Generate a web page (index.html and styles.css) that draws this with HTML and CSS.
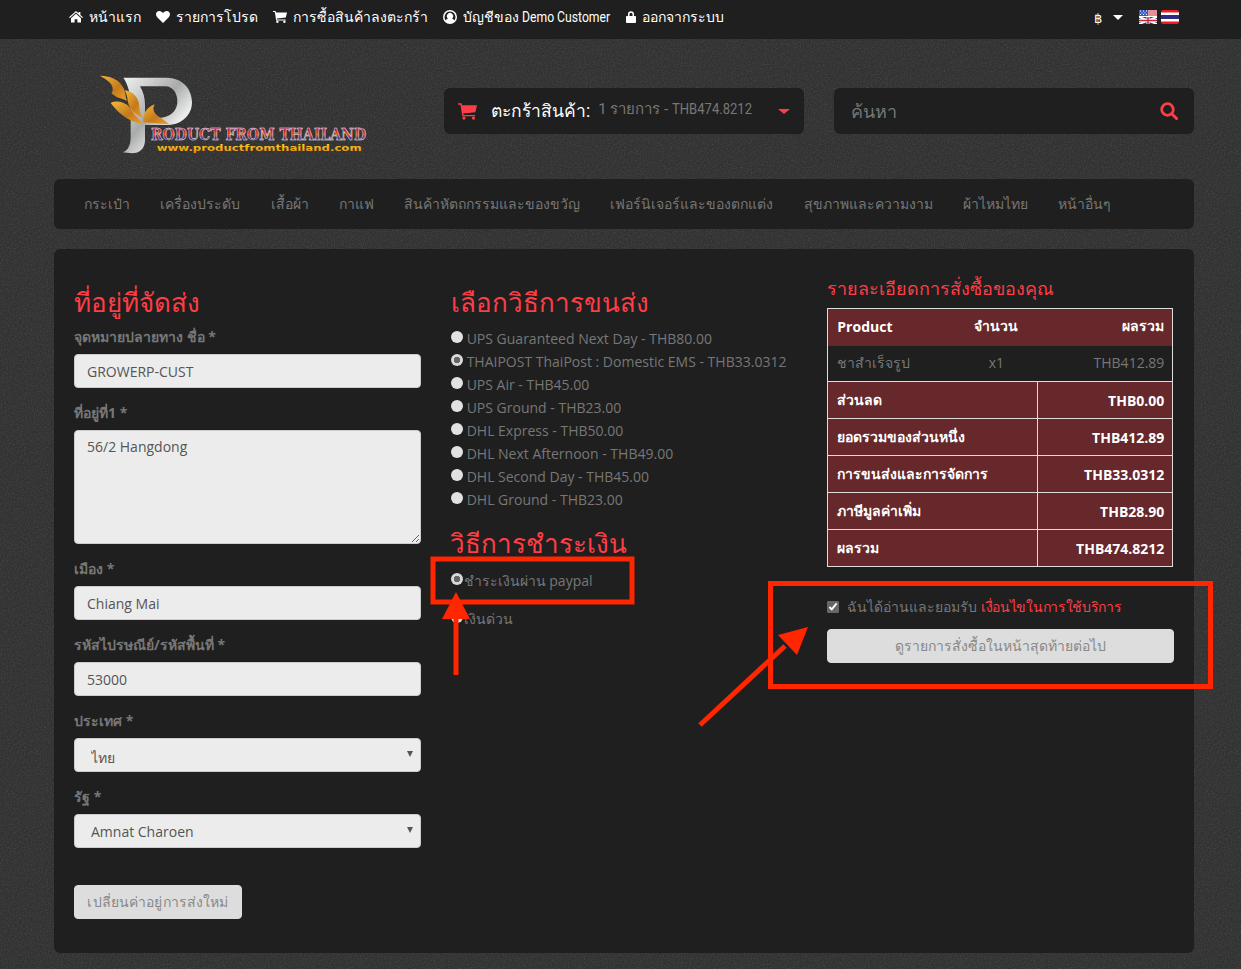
FILE: index.html
```html
<!DOCTYPE html>
<html lang="th">
<head>
  <meta charset="UTF-8" />
  <title>ที่อยู่ที่จัดส่ง - Product From Thailand</title>
  <link rel="stylesheet" href="styles.css">
</head>
<body>
  <div class="topbar">
    <nav class="toplinks">
      <a href="#"><svg class="ico" viewBox="0 0 14 12"><path d="M7 0 L9.6 2.3 V1 H11.4 V3.9 L14 6.3 L13.2 7.1 L7 1.6 L.8 7.1 L0 6.3Z M7 2.8 L12 7.2 V11.6 H8.4 V8.2 H5.6 V11.6 H2 V7.2Z"/></svg>หน้าแรก</a>
      <a href="#"><svg class="ico ico-heart" viewBox="0 0 14 12"><path d="M7 12 L1 6 C-1 3.5 .2 0 3.4 0 C5 0 6.3 1 7 2.2 C7.7 1 9 0 10.6 0 C13.8 0 15 3.5 13 6Z"/></svg>รายการโปรด</a>
      <a href="#"><svg class="ico" viewBox="0 0 14 12"><path d="M0 0 H2.6 L3 1.4 H14 L12.8 6.6 L3.9 7.5 L4.1 8.5 H12.6 V9.5 H3.2 L1.8 1 H0Z"/><circle cx="4.4" cy="10.8" r="1.2"/><circle cx="11.4" cy="10.8" r="1.2"/></svg>การซื้อสินค้าลงตะกร้า</a>
      <a href="#"><svg class="ico" viewBox="0 0 14 14"><path fill-rule="evenodd" d="M7 0 A7 7 0 1 0 7 14 A7 7 0 1 0 7 0Z M7 1.6 A5.4 5.4 0 0 1 11.2 10.4 C10.4 9.2 9.6 8.6 9 8.5 A3.1 3.1 0 1 0 5 8.5 C4.4 8.6 3.6 9.2 2.8 10.4 A5.4 5.4 0 0 1 7 1.6Z"/></svg>บัญชีของ&nbsp;<span class="narrow">Demo Customer</span></a>
      <a href="#"><svg class="ico ico-lock" viewBox="0 0 10 12"><path fill-rule="evenodd" d="M2 5 V3.2 A3 3 0 0 1 8 3.2 V5 H9.2 A.8 .8 0 0 1 10 5.8 V11.2 A.8 .8 0 0 1 9.2 12 H.8 A.8 .8 0 0 1 0 11.2 V5.8 A.8 .8 0 0 1 .8 5Z M3.5 5 H6.5 V3.2 A1.5 1.5 0 0 0 3.5 3.2Z"/></svg>ออกจากระบบ</a>
    </nav>
    <div class="topright">
      <span class="currency">฿</span>
      <span class="caret caret-white"></span>
      <svg class="flag flag-en" viewBox="0 0 18 14">
        <rect width="18" height="14" fill="#fff"/>
        <path d="M0 1H18M0 3H18M0 5H18" stroke="#c8242f" stroke-width="1"/>
        <rect width="9" height="6" fill="#2f5fc8"/>
        <path d="M1 1h1M4 1h1M7 1h1M2.5 3h1M5.5 3h1M1 4.500h1M4 4.500h1M7 4.500h1" stroke="#fff" stroke-width="1"/>
        <rect y="7" width="18" height="7" fill="#2b3f8c"/>
        <path d="M0 7L18 14M18 7L0 14" stroke="#fff" stroke-width="2"/>
        <path d="M9 7V14M0 10.500H18" stroke="#fff" stroke-width="3"/>
        <path d="M9 7V14M0 10.500H18" stroke="#c8242f" stroke-width="1.500"/>
      </svg>
      <svg class="flag flag-th" viewBox="0 0 18 14">
        <rect width="18" height="14" rx="2" fill="#ed1c24"/>
        <rect y="2.500" width="18" height="9" fill="#fff"/>
        <rect y="5" width="18" height="4" fill="#2d2a7f"/>
      </svg>
    </div>
  </div>

  <div class="page">
    <header class="header">
      <a class="logo" href="#">
        <svg class="logo-art" viewBox="0 0 870 300" width="290" height="100">
          <defs>
            <linearGradient id="silver" x1="0" y1="0" x2="1" y2="1">
              <stop offset="0" stop-color="#f2f2f2"/>
              <stop offset=".45" stop-color="#a9abab"/>
              <stop offset=".7" stop-color="#eeeeee"/>
              <stop offset="1" stop-color="#b5b6b6"/>
            </linearGradient>
            <linearGradient id="gold" x1="0" y1="0" x2="1" y2="1">
              <stop offset="0" stop-color="#f4b93c"/>
              <stop offset=".55" stop-color="#c47a1c"/>
              <stop offset="1" stop-color="#ee9f2c"/>
            </linearGradient>
            <linearGradient id="stripes" x1="0" y1="0" x2="0" y2="1">
              <stop offset="0" stop-color="#5c1e8c"/>
              <stop offset=".3" stop-color="#b01c3c"/>
              <stop offset=".55" stop-color="#e0502a"/>
              <stop offset=".75" stop-color="#3b2a9a"/>
              <stop offset="1" stop-color="#c01c3c"/>
            </linearGradient>
            <linearGradient id="amber" x1="0" y1="0" x2="0" y2="1">
              <stop offset="0" stop-color="#ffd21f"/>
              <stop offset="1" stop-color="#e88a0c"/>
            </linearGradient>
          </defs>
          <path fill="url(#silver)" fill-rule="evenodd" d="M100 38 H228 C282 38 306 76 306 112 C306 150 276 178 236 180 H165 V225 C165 250 150 265 125 265 L98 262 C115 255 122 240 122 215 V120 C122 90 115 60 100 38Z M150 64 H226 C250 64 264 88 262 114 C259 140 240 156 212 158 H165 V120 C165 100 160 80 150 64Z"/>
          <path fill="url(#gold)" d="M30 32 C58 32 90 42 102 72 C108 88 106 98 112 108 C96 100 76 98 64 84 C72 78 68 60 58 52 C50 44 40 38 30 32Z"/>
          <path fill="url(#gold)" d="M104 76 C126 78 146 96 148 122 C148 136 152 148 160 160 C138 150 118 134 114 112 C112 98 110 86 104 76Z"/>
          <path fill="url(#gold)" d="M62 114 C82 104 106 112 120 128 C130 142 140 160 162 176 C126 176 88 150 62 114Z"/>
          <path fill="url(#gold)" d="M160 172 C156 150 170 126 194 118 C184 136 196 150 214 160 L238 178Z"/>
          <text class="logo-name" x="183" y="224" textLength="645" lengthAdjust="spacingAndGlyphs">RODUCT FROM THAILAND</text>
          <text class="logo-url" x="200" y="259" textLength="615" lengthAdjust="spacingAndGlyphs">www.productfromthailand.com</text>
        </svg>
      </a>
      <div class="cartbox">
        <svg class="cart-ico" viewBox="0 0 14 12"><path d="M0 0 H2.6 L3 1.4 H14 L12.8 6.600 L3.900 7.500 L4.100 8.500 H12.600 V9.500 H3.200 L1.800 1 H0Z"/><circle cx="4.400" cy="10.800" r="1.200"/><circle cx="11.400" cy="10.800" r="1.200"/></svg>
        <span class="cart-title">ตะกร้าสินค้า:</span>
        <span class="cart-info">1 รายการ - <span class="narrow">THB474.8212</span></span>
        <span class="caret caret-red"></span>
      </div>
      <div class="searchbox">
        <input class="search-input" type="text" placeholder="ค้นหา">
        <svg class="search-ico" viewBox="0 0 18 18"><circle cx="7.500" cy="7.500" r="5.800" fill="none" stroke="#ff3d46" stroke-width="2.800"/><path d="M11.800 11.800 L16.500 16.500" stroke="#ff3d46" stroke-width="3" stroke-linecap="round"/></svg>
      </div>
    </header>

    <nav class="mainnav">
      <a href="#">กระเป๋า</a>
      <a href="#">เครื่องประดับ</a>
      <a href="#">เสื้อผ้า</a>
      <a href="#">กาแฟ</a>
      <a href="#">สินค้าหัตถกรรมและของขวัญ</a>
      <a href="#">เฟอร์นิเจอร์และของตกแต่ง</a>
      <a href="#">สุขภาพและความงาม</a>
      <a href="#">ผ้าไหมไทย</a>
      <a href="#">หน้าอื่นๆ</a>
    </nav>

    <main class="panel">
      <section class="col">
        <h2 class="title">ที่อยู่ที่จัดส่ง</h2>
        <div class="group">
          <label>จุดหมายปลายทาง ชื่อ *</label>
          <input class="field" type="text" value="GROWERP-CUST">
        </div>
        <div class="group">
          <label>ที่อยู่ที่1 *</label>
          <textarea class="field area">56/2 Hangdong</textarea>
        </div>
        <div class="group">
          <label>เมือง *</label>
          <input class="field" type="text" value="Chiang Mai">
        </div>
        <div class="group">
          <label>รหัสไปรษณีย์/รหัสพื้นที่ *</label>
          <input class="field" type="text" value="53000">
        </div>
        <div class="group">
          <label>ประเทศ *</label>
          <select class="field pick pick-th"><option>ไทย</option></select>
        </div>
        <div class="group">
          <label>รัฐ *</label>
          <select class="field pick"><option>Amnat Charoen</option></select>
        </div>
        <button class="btn btn-reset">เปลี่ยนค่าอยู่การส่งใหม่</button>
      </section>

      <section class="col">
        <h2 class="title">เลือกวิธีการขนส่ง</h2>
        <div class="radios">
          <label class="radio"><input type="radio" name="ship">UPS Guaranteed Next Day - THB80.00</label>
          <label class="radio"><input type="radio" name="ship" checked>THAIPOST ThaiPost : Domestic EMS - THB33.0312</label>
          <label class="radio"><input type="radio" name="ship">UPS Air - THB45.00</label>
          <label class="radio"><input type="radio" name="ship">UPS Ground - THB23.00</label>
          <label class="radio"><input type="radio" name="ship">DHL Express - THB50.00</label>
          <label class="radio"><input type="radio" name="ship">DHL Next Afternoon - THB49.00</label>
          <label class="radio"><input type="radio" name="ship">DHL Second Day - THB45.00</label>
          <label class="radio"><input type="radio" name="ship">DHL Ground - THB23.00</label>
        </div>
        <h2 class="title title-pay">วิธีการชำระเงิน</h2>
        <label class="radio radio-pay"><input type="radio" name="pay" checked>ชำระเงินผ่าน paypal</label>
        <label class="radio radio-pay"><input type="radio" name="pay">เงินด่วน</label>
      </section>

      <section class="col">
        <h3 class="subtitle">รายละเอียดการสั่งซื้อของคุณ</h3>
        <table class="summary">
          <colgroup><col class="c-name"><col class="c-qty"><col class="c-total"></colgroup>
          <tr class="dark-red">
            <th>Product</th>
            <th class="center">จำนวน</th>
            <th class="right">ผลรวม</th>
          </tr>
          <tr class="item">
            <td>ชาสำเร็จรูป</td>
            <td class="center">x1</td>
            <td class="right">THB412.89</td>
          </tr>
          <tr class="dark-red sum"><td colspan="2">ส่วนลด</td><td class="right">THB0.00</td></tr>
          <tr class="dark-red sum"><td colspan="2">ยอดรวมของส่วนหนึ่ง</td><td class="right">THB412.89</td></tr>
          <tr class="dark-red sum"><td colspan="2">การขนส่งและการจัดการ</td><td class="right">THB33.0312</td></tr>
          <tr class="dark-red sum"><td colspan="2">ภาษีมูลค่าเพิ่ม</td><td class="right">THB28.90</td></tr>
          <tr class="dark-red sum"><td colspan="2">ผลรวม</td><td class="right">THB474.8212</td></tr>
        </table>
        <label class="agree"><input type="checkbox" checked>ฉันได้อ่านและยอมรับ <a href="#">เงื่อนไขในการใช้บริการ</a></label>
        <button class="btn btn-next">ดูรายการสั่งซื้อในหน้าสุดท้ายต่อไป</button>
      </section>
    </main>
  </div>

  <!-- red marks drawn over the screenshot -->
  <svg class="marks" viewBox="0 0 1241 969" width="1241" height="969">
    <rect x="433" y="559" width="199" height="43" fill="none" stroke="#ff2600" stroke-width="5"/>
    <rect x="770.500" y="583.500" width="440" height="103" fill="none" stroke="#ff2600" stroke-width="5"/>
    <path d="M456 675 V615" stroke="#ff2600" stroke-width="5"/>
    <polygon points="456,592 470,619 442,619" fill="#ff2600"/>
    <path d="M700 725 L785 646" stroke="#ff2600" stroke-width="5"/>
    <polygon points="808,627 778,635 797,655" fill="#ff2600"/>
  </svg>
</body>
</html>
```

FILE: styles.css
```css
html, body {
  margin: 0;
  padding: 0;
}
body {
  position: relative;
  height: 969px;
  overflow: hidden;
  font-family: "Open Sans", "Noto Sans", sans-serif;
  font-size: 14px;
  color: #777;
  background-color: #323232;
  background-image: url("data:image/svg+xml,%3Csvg xmlns='http://www.w3.org/2000/svg' width='300' height='300'%3E%3Cfilter id='n'%3E%3CfeTurbulence type='fractalNoise' baseFrequency='.7' numOctaves='2'/%3E%3CfeColorMatrix values='0 0 0 0 .42 0 0 0 0 .42 0 0 0 0 .42 0 0 0 .3 -.12'/%3E%3C/filter%3E%3Crect width='300' height='300' filter='url(%23n)'/%3E%3C/svg%3E");
}
a {
  text-decoration: none;
  color: inherit;
}

/* the site uses a condensed face for latin text in the bars */
.narrow {
  display: inline-block;
  margin-right: -13px;
  transform: scaleX(.87);
  transform-origin: left center;
}

/* top bar */
.topbar {
  display: flex;
  justify-content: space-between;
  align-items: center;
  height: 39px;
  padding: 0 62px 5px 69px;
  box-sizing: border-box;
  background: #1f1f1f;
  color: #fff;
}
.toplinks {
  display: flex;
  gap: 15px;
}
.toplinks a {
  display: flex;
  align-items: center;
  font-family: Roboto, "Liberation Sans", sans-serif;
  font-size: 14px;
  white-space: nowrap;
}
.ico {
  width: 14px;
  height: 14px;
  margin-right: 6px;
  fill: #fff;
}
.ico-lock {
  width: 10px;
}
.topright {
  display: flex;
  align-items: center;
}
.currency {
  font-family: "DejaVu Sans", sans-serif;
  font-size: 13px;
  width: 19px;
  margin: 2px 0 0 -3px;
}
.caret {
  display: inline-block;
  width: 0;
  height: 0;
  border-style: solid;
  border-color: transparent;
  border-width: 5px 5px 0;
}
.caret-white {
  border-top-color: #fff;
  margin-right: 16px;
}
.caret-red {
  border-width: 5px 6px 0;
  border-top-color: #ff3d46;
  margin-left: auto;
}
.flag {
  width: 18px;
  height: 14px;
}
.flag-th {
  margin-left: 4px;
}

/* header */
.page {
  width: 1140px;
  margin-left: 54px;
}
.header {
  display: flex;
  align-items: flex-start;
  height: 140px;
}
.logo {
  display: block;
  width: 390px;
  padding: 26px 0 0 36px;
  box-sizing: border-box;
  flex: none;
}
.logo-art {
  overflow: visible;
}
.cartbox, .searchbox {
  display: flex;
  align-items: center;
  width: 360px;
  height: 46px;
  margin-top: 49px;
  box-sizing: border-box;
  background: #1f1f1f;
  border-radius: 6px;
}
.cartbox {
  padding: 0 14px;
}
.cart-ico {
  width: 19px;
  height: 17px;
  margin-right: 14px;
  fill: #ff3d46;
}
.cart-title {
  font-family: Roboto, "Liberation Sans", sans-serif;
  font-size: 17.5px;
  color: #fff;
  margin-right: 8px;
}
.cart-info {
  font-family: Roboto, "Liberation Sans", sans-serif;
  font-size: 15px;
  color: #777;
  margin-bottom: 4px;
}
.searchbox {
  margin-left: 30px;
  padding: 0 16px 0 17px;
}
.search-input {
  flex: 1;
  min-width: 0;
  border: none;
  background: none;
  outline: none;
  padding: 0;
  font-family: inherit;
  font-size: 18px;
  color: #777;
}
.search-input::placeholder {
  color: #777;
}
.search-ico {
  width: 18px;
  height: 18px;
}

/* main navigation */
.mainnav {
  display: flex;
  gap: 30.25px;
  align-items: center;
  height: 50px;
  padding: 0 30px;
  background: #1f1f1f;
  border-radius: 6px;
  font-size: 14px;
  color: #777;
}

/* content panel */
.panel {
  display: grid;
  grid-template-columns: repeat(3, 1fr);
  gap: 30px;
  height: 704px;
  margin-top: 20px;
  padding: 0 20px;
  box-sizing: border-box;
  background: #1f1f1f;
  border-radius: 6px;
}
.title {
  margin: 35px 0 0;
  height: 43px;
  line-height: 36px;
  font-size: 26px;
  font-weight: 400;
  color: #ff3d46;
}
.title-pay {
  margin: 14px 0 0 -1px;
  height: 37px;
}
.subtitle {
  margin: 26px 0 0;
  height: 33px;
  line-height: 26px;
  font-size: 18px;
  font-weight: 400;
  color: #ff3d46;
}

/* form column */
.group {
  margin-bottom: 15px;
}
.group label {
  display: block;
  height: 20px;
  line-height: 20px;
  margin-bottom: 7px;
  font-weight: 700;
  color: #777;
}
.field {
  display: block;
  width: 100%;
  height: 34px;
  padding: 6px 12px;
  box-sizing: border-box;
  border: 1px solid #ccc;
  border-radius: 4px;
  background: #ececec;
  font-family: inherit;
  font-size: 14px;
  color: #555;
}
.area {
  height: 114px;
  resize: vertical;
}
.pick {
  appearance: none;
  padding-left: 16px;
  background-image: url("data:image/svg+xml,%3Csvg xmlns='http://www.w3.org/2000/svg' width='6' height='6'%3E%3Cpath d='M0 0H6L3 6Z' fill='%23555'/%3E%3C/svg%3E");
  background-repeat: no-repeat;
  background-position: right 7px top 12px;
}
.pick-th {
  padding-top: 8px;
  padding-bottom: 4px;
}
.btn {
  height: 34px;
  border: 1px solid #ddd;
  border-radius: 4px;
  background: #ddd;
  font-family: inherit;
  font-size: 14px;
  color: #888;
}
.btn-reset {
  margin-top: 22px;
  width: 168px;
  padding: 0;
  letter-spacing: .12px;
}

/* shipping and payment */
.radio {
  display: flex;
  align-items: center;
  height: 23px;
  white-space: nowrap;
}
.radio input {
  appearance: none;
  width: 12px;
  height: 12px;
  margin: 0 4px 4px 0;
  border-radius: 50%;
  background: #e2e2e2;
  flex: none;
}
.radio input:checked {
  background: radial-gradient(circle, #666 0 3px, #d8d8d8 3.5px);
}
.radio-pay {
  height: 38px;
}
.radio-pay input {
  margin-right: 1px;
  margin-bottom: 4px;
}

/* order summary */
.summary {
  width: 346px;
  table-layout: fixed;
  border-collapse: collapse;
  border: 1px solid #ddd;
}
.c-name { width: 126px; }
.c-qty { width: 84px; }
.summary th, .summary td {
  height: 37px;
  padding: 0 8px 0 9px;
  text-align: left;
  box-sizing: border-box;
}
.summary .center { text-align: center; }
.summary .right { text-align: right; }
.summary th {
  padding-bottom: 2px;
}
.summary .item td {
  height: 36px;
  padding-bottom: 1px;
  border-bottom: 1px solid #ddd;
}
.dark-red {
  background: #66282b;
  color: #fff;
  font-weight: 700;
}
.item {
  color: #777;
}
.sum td {
  border: 1px solid #ddd;
}
.agree {
  display: flex;
  align-items: center;
  height: 20px;
  margin-top: 30px;
  white-space: pre;
  color: #777;
}
.agree input {
  width: 12px;
  height: 12px;
  margin: 0 8px 0 0;
  accent-color: #666;
}
.agree a {
  color: #ff3d46;
  letter-spacing: -.3px;
}
.btn-next {
  display: block;
  width: 100%;
  margin-top: 12px;
}

.marks {
  position: absolute;
  top: 0;
  left: 0;
  pointer-events: none;
}
.logo-name {
  font-family: "DejaVu Serif", serif;
  font-weight: 700;
  font-size: 50px;
  fill: url(#stripes);
  stroke: #f3e9ef;
  stroke-width: 1.5px;
}
.logo-url {
  font-family: "DejaVu Sans", sans-serif;
  font-weight: 700;
  font-size: 25px;
  fill: url(#amber);
}
```
